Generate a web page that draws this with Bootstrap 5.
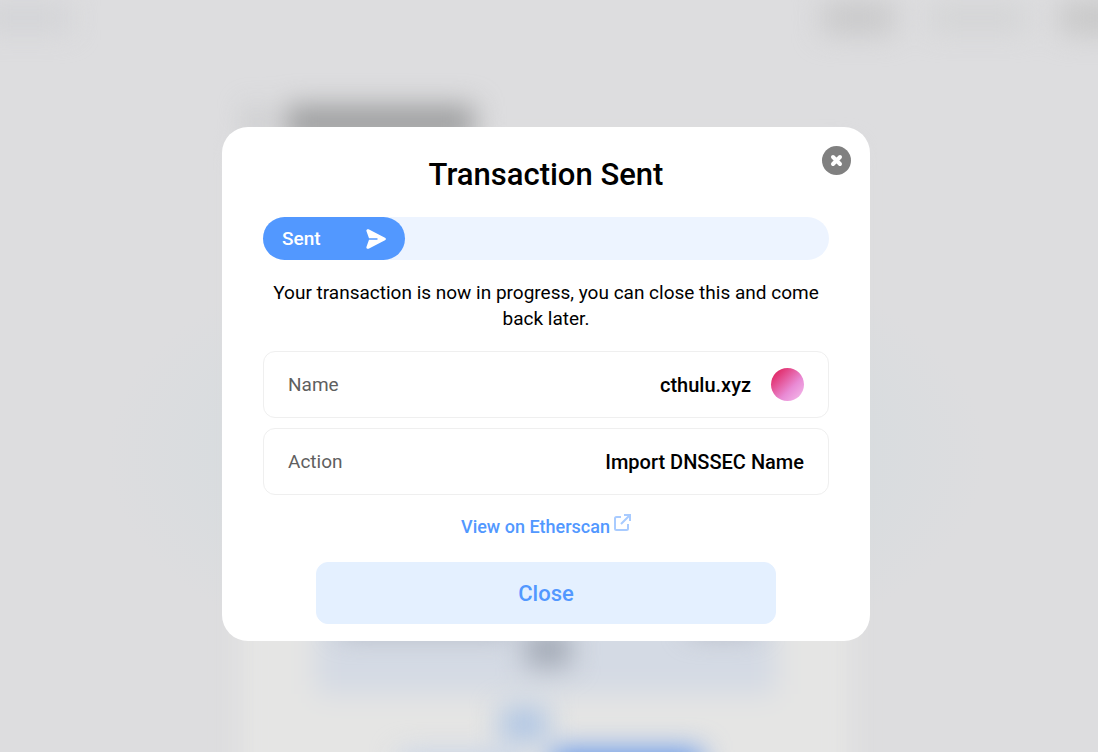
<!DOCTYPE html>
<html lang="en">
<head>
<meta charset="utf-8">
<meta name="viewport" content="width=device-width, initial-scale=1">
<title>Transaction Sent</title>
<link rel="stylesheet" href="https://cdn.jsdelivr.net/npm/bootstrap@5.3.0/dist/css/bootstrap.min.css">
<style>
  :root { --accent: #5298ff; }
  body { font-family: Roboto, "Liberation Sans", sans-serif; font-size: 19px; line-height: 26px; color: #000; background: #dddddf; }
  .backdrop-art { z-index: -1; overflow: hidden; }
  .stage { padding: 16px 6px 0 0; }
  .dialog-box { width: 100%; max-width: 648px; border-radius: 26px; padding: 30px 41px 17px; background: #fff; }
  .dialog-title { font-size: 31px; line-height: 36px; font-weight: 500; margin-bottom: 24px; }
  .dismiss { top: 19px; right: 19px; width: 29px; height: 29px; background: #808080; }
  .track { height: 43px; background: #edf4ff; }
  .track-fill { min-width: 142px; padding: 0 19px; font-weight: 500; background: var(--accent); }
  .message { margin: 20px 0 19px; }
  .info-list { gap: 10px; }
  .info-row { min-height: 67px; padding: 0 24px; border: 1px solid #efefef; border-radius: 12px; }
  .info-row dt { font-weight: 400; color: #5f5f5f; }
  .info-row dd { font-size: 20px; font-weight: 500; }
  .avatar { width: 33px; height: 33px; margin-left: 20px; background: linear-gradient(135deg, #e0205c 8%, #e98bd5 62%, #f5c0ee 100%); }
  .scan-link { font-size: 18px; font-weight: 500; color: var(--accent); margin: 19px 0 22px; }
  .scan-link:hover { color: #2f7df0; }
  .btn-soft { --bs-btn-color: var(--accent); --bs-btn-bg: #e4f0ff; --bs-btn-border-color: #e4f0ff; --bs-btn-hover-color: var(--accent); --bs-btn-hover-bg: #d5e7ff; --bs-btn-hover-border-color: #d5e7ff; --bs-btn-border-radius: 12px; --bs-btn-font-size: 22px; --bs-btn-font-weight: 500; width: 100%; max-width: 460px; height: 62px; }
</style>
</head>
<body>
<div class="backdrop-art position-fixed top-0 start-0 w-100 h-100" aria-hidden="true">
  <svg width="100%" height="100%" viewBox="0 0 1098 752" preserveAspectRatio="xMidYMid slice">
    <defs>
      <filter id="soft" x="-100%" y="-100%" width="300%" height="300%" color-interpolation-filters="sRGB"><feGaussianBlur stdDeviation="14"/></filter>
      <radialGradient id="glow"><stop offset="0" stop-color="#d2dcdf"/><stop offset=".7" stop-color="#d8dcdf"/><stop offset="1" stop-color="#dddddf"/></radialGradient>
    </defs>
    <rect width="1098" height="752" fill="#dddddf"/>
    <ellipse cx="546" cy="455" rx="440" ry="230" fill="url(#glow)"/>
    <g filter="url(#soft)">
      <rect x="-20" y="5" width="90" height="26" fill="#d2d3d6"/>
      <rect x="822" y="2" width="72" height="32" fill="#c8c8c9"/>
      <rect x="930" y="6" width="96" height="24" fill="#d2d3d4"/>
      <rect x="1060" y="2" width="70" height="32" fill="#c7c7c7"/>
      <rect x="248" y="108" width="14" height="30" fill="#bebfc0"/>
      <rect x="286" y="106" width="188" height="34" fill="#9a9b9c"/>
      <rect x="238" y="150" width="614" height="660" fill="#e5e5e4"/>
      <rect x="316" y="560" width="460" height="134" fill="#d4dae4"/>
    </g>
    <g filter="url(#soft)">
      <rect x="340" y="612" width="170" height="20" fill="#a2a8b4"/>
      <rect x="690" y="612" width="66" height="20" fill="#a8acb8"/>
      <rect x="526" y="632" width="44" height="34" fill="#9ea5b1"/>
      <rect x="500" y="708" width="48" height="32" fill="#abc3e4"/>
      <rect x="400" y="753" width="120" height="40" fill="#c6d3e8"/>
      <rect x="552" y="750" width="150" height="40" fill="#5d92ea"/>
    </g>
  </svg>
</div>

<div class="stage min-vh-100 d-flex align-items-center justify-content-center">
  <main class="dialog-box position-relative d-flex flex-column align-items-center" role="dialog" aria-labelledby="dialogTitle">
    <button type="button" class="dismiss btn border-0 rounded-circle p-0 position-absolute d-flex align-items-center justify-content-center" aria-label="Close dialog">
      <svg width="13" height="13" viewBox="0 0 13 13" fill="none" stroke="#fff" stroke-width="4" stroke-linecap="round" aria-hidden="true"><path d="M3 3l7 7M10 3l-7 7"/></svg>
    </button>
    <h1 class="dialog-title text-center" id="dialogTitle">Transaction Sent</h1>

    <div class="track w-100 rounded-pill d-flex" role="progressbar" aria-label="Transaction progress" aria-valuenow="25" aria-valuemin="0" aria-valuemax="100">
      <div class="track-fill rounded-pill text-white d-flex align-items-center justify-content-between" style="width: 25%">
        <span>Sent</span>
        <svg width="20" height="20" viewBox="0 0 20 20" aria-hidden="true"><path fill="#fff" d="M.5 2.200C0 .8 1.200-.3 2.600.3L19 8.800c1.200.6 1.200 1.800 0 2.400L2.600 19.700C1.200 20.300 0 19.200.5 17.800L3 10.700H11a.7.7 0 0 0 0-1.400H3z"/></svg>
      </div>
    </div>

    <p class="message text-center">Your transaction is now in progress, you can close this and come back later.</p>

    <dl class="info-list w-100 d-flex flex-column mb-0">
      <div class="info-row d-flex align-items-center justify-content-between">
        <dt>Name</dt>
        <dd class="mb-0 d-flex align-items-center">cthulu.xyz<span class="avatar rounded-circle"></span></dd>
      </div>
      <div class="info-row d-flex align-items-center justify-content-between">
        <dt>Action</dt>
        <dd class="mb-0">Import DNSSEC Name</dd>
      </div>
    </dl>

    <a href="#" class="scan-link text-decoration-none d-inline-flex align-items-start">View on Etherscan<svg class="ms-1" width="17" height="17" viewBox="0 0 17 17" fill="none" stroke="#a8cbff" stroke-width="2" aria-hidden="true"><path d="M7 3H2.500Q1 3 1 4.500V14.500Q1 16 2.500 16H12.500Q14 16 14 14.500V10M10 1H16V7M16 1L7 10"/></svg></a>

    <button type="button" class="btn btn-soft">Close</button>
  </main>
</div>
<script src="https://cdn.jsdelivr.net/npm/bootstrap@5.3.0/dist/js/bootstrap.bundle.min.js"></script>
</body>
</html>
